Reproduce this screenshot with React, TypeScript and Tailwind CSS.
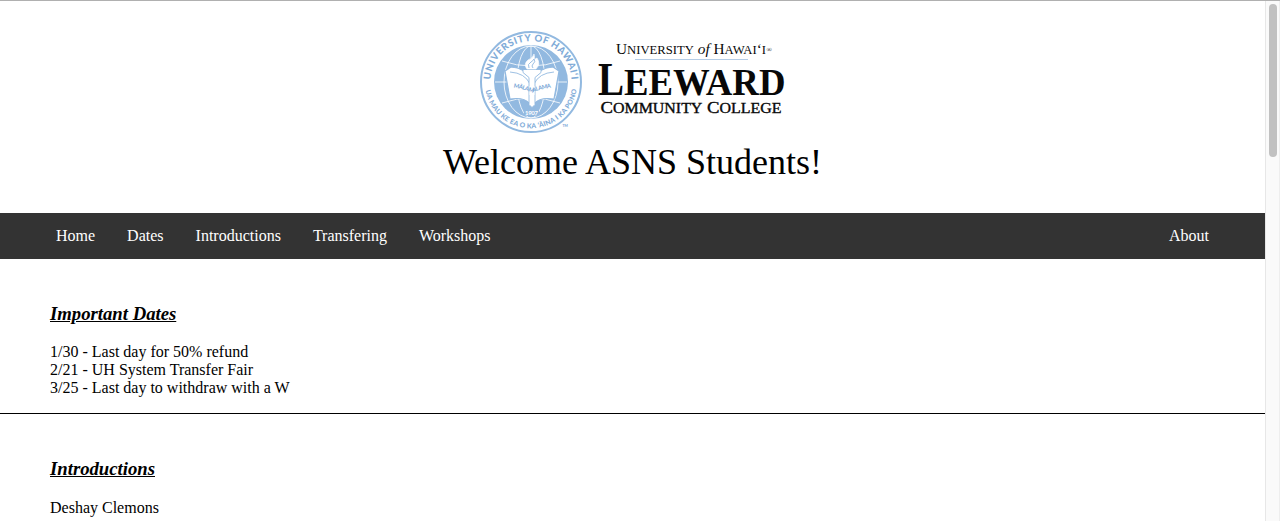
import React from "react";

const serif = "font-['Liberation_Serif',serif]";

function Seal() {
  return (
    <g>
      <circle cx="531" cy="82" r="50" fill="#fff" stroke="#92b9e0" strokeWidth="2" />
      <circle cx="531" cy="82" r="37" fill="#92b9e0" />
      <g fill="none" stroke="#fff" strokeWidth="0.8">
        <ellipse cx="531" cy="82" rx="27" ry="36" />
        <ellipse cx="531" cy="82" rx="14" ry="36" />
        <path d="M531 46v12M495 82h72M502 61q29 10 58 0M502 103q29-10 58 0" />
      </g>
      <path
        d="M505 71l6-4q14 1 21 12q7-11 21-12l6 4-5 28q-14-2-19 4v3h-6v-3q-5-6-19-4z"
        fill="#fff"
        stroke="#92b9e0"
        strokeWidth="1.2"
      />
      <path d="M510 72q15 1 20 12M554 72q-15 1-20 12" fill="none" stroke="#92b9e0" strokeWidth="0.9" />
      <path d="M523 69.5h18v3l-6 5v27l-3 3-3-3v-27l-6-5z" fill="#fff" stroke="#92b9e0" strokeWidth="0.9" />
      <path d="M529.5 86h5v9h-5z" fill="#fff" />
      <path
        d="M527 69q-4-5 1-9 5-2 6-6 1 3 0 5 2 0 3-1 4 6-1 11z"
        fill="#fff"
        stroke="#fff"
        strokeWidth="0.6"
      />
      <path d="M529 68q-2-4 2-6 3-2 3-3 2 3-1 5-2 2 0 4" fill="none" stroke="#92b9e0" strokeWidth="0.9" />
      <path id="motto" d="M513 87.5q9 1 19 5q10-4 20-5" fill="none" />
      <path id="sealTopArc" d="M492 93a40.6 40.6 0 1 1 78 0" fill="none" />
      <path id="sealBottomArc" d="M484.7 82a46.3 46.3 0 0 0 92.6 0" fill="none" />
      <g fill="#7fabd8" className="font-['Lato',sans-serif] font-black">
        <text fontSize="9.6">
          <textPath href="#sealTopArc" startOffset="13.5" textLength="123" lengthAdjust="spacing">UNIVERSITY OF HAWAI‘I</textPath>
        </text>
        <text fontSize="6.8">
          <textPath href="#sealBottomArc" startOffset="8.5" textLength="129" lengthAdjust="spacing">UA MAU KE EA O KA ‘ĀINA I KA PONO</textPath>
        </text>
        <text fontSize="5.8">
          <textPath href="#motto" startOffset="0.5" textLength="39" lengthAdjust="spacing">MĀLAMALAMA</textPath>
        </text>
        <text x="562.5" y="126.5" fontSize="3.5">TM</text>
      </g>
      <path d="M524 109.5h15v6h-15z" fill="#92b9e0" />
      <text x="525" y="115" fontSize="6" fill="#fff" textLength="13" className="font-['Lato',sans-serif] font-bold">1907</text>
    </g>
  );
}

function Wordmark() {
  return (
    <g fill="#080808" className={serif}>
      <text x="616" y="54" fontSize="14.5" textLength="150" lengthAdjust="spacingAndGlyphs">
        U<tspan fontSize="12">NIVERSITY</tspan> <tspan fontStyle="italic">of</tspan> H<tspan fontSize="12">AWAI</tspan>‘<tspan fontSize="12">I</tspan>
      </text>
      <text x="766.5" y="52" fontSize="7">®</text>
      <path d="M635 59.5h113" stroke="#b4cce6" />
      <text x="598" y="94.5" fontSize="46" fontWeight="bold" textLength="26" lengthAdjust="spacingAndGlyphs">L</text>
      <text x="624" y="94.5" fontSize="38.5" fontWeight="bold" textLength="161.5" lengthAdjust="spacingAndGlyphs">EEWARD</text>
      <text x="600.5" y="112.7" fontSize="17" stroke="#080808" strokeWidth="0.35" textLength="181" lengthAdjust="spacingAndGlyphs">
        C<tspan fontSize="14.5">OMMUNITY</tspan> C<tspan fontSize="14.5">OLLEGE</tspan>
      </text>
    </g>
  );
}

function NavLink({ children }: { children: React.ReactNode }) {
  return <a href="#" className="px-4 py-3.5 leading-[18px] text-white">{children}</a>;
}

function SectionTitle({ children }: { children: React.ReactNode }) {
  return <h3 className="text-[18.72px] leading-[21px] font-bold italic underline">{children}</h3>;
}

export default function App() {
  return (
    <div className="flex h-[521px] w-full overflow-hidden border-t border-[#b0b0b0] bg-white font-['Liberation_Serif',serif] text-base text-black">
      <main className="min-w-0 flex-1">
        <header className="flex h-[212px] flex-col items-center pt-[27px]">
          <svg className="overflow-visible" width="309" height="108" viewBox="478 28 309 108" role="img" aria-label="Leeward Community College">
            <Seal />
            <Wordmark />
          </svg>
          <h1 className="mt-[5px] text-[36px] leading-[42px]">Welcome ASNS Students!</h1>
        </header>
        <nav className="flex h-[46px] justify-between bg-[#333] px-10">
          <div className="flex">
            <NavLink>Home</NavLink>
            <NavLink>Dates</NavLink>
            <NavLink>Introductions</NavLink>
            <NavLink>Transfering</NavLink>
            <NavLink>Workshops</NavLink>
          </div>
          <NavLink>About</NavLink>
        </nav>
        <section className="h-[155px] border-b border-black px-[50px] pt-11">
          <SectionTitle>Important Dates</SectionTitle>
          <div className="mt-[19px] leading-[18px]">
            <p>1/30 - Last day for 50% refund</p>
            <p>2/21 - UH System Transfer Fair</p>
            <p>3/25 - Last day to withdraw with a W</p>
          </div>
        </section>
        <section className="px-[50px] pt-11">
          <SectionTitle>Introductions</SectionTitle>
          <p className="mt-5 leading-[18px]">Deshay Clemons</p>
        </section>
      </main>
      <aside className="flex w-[15px] justify-center border-x border-l-[#e7e7e7] border-r-[#eeeeee] bg-[#fafafa] pt-[3px] pl-px">
        <div className="h-[153px] w-2 rounded-full bg-[#c1c1c1]" />
      </aside>
    </div>
  );
}
